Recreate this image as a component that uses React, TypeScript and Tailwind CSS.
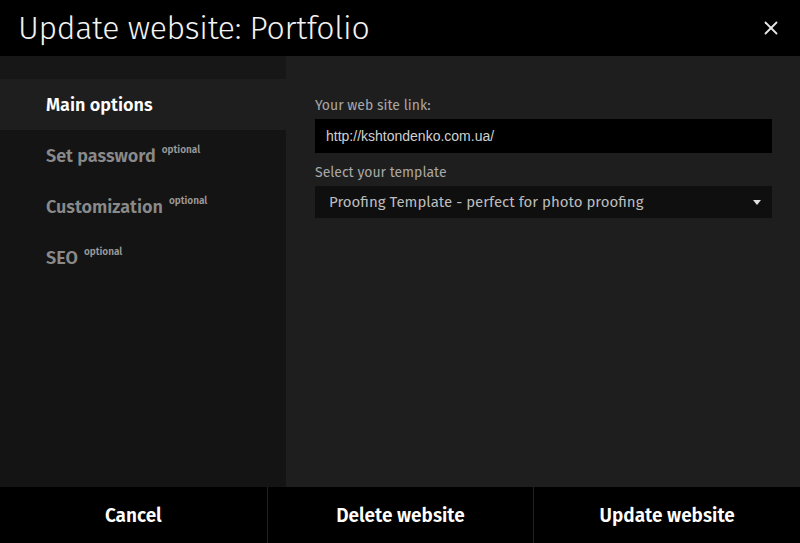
import { X } from "lucide-react";

const navItems = [
  { label: "Main options", optional: false, active: true },
  { label: "Set password", optional: true, active: false },
  { label: "Customization", optional: true, active: false },
  { label: "SEO", optional: true, active: false },
];

const fira = "font-['Fira_Sans','Open_Sans','Noto_Sans',sans-serif]";

export default function App() {
  return (
    <div className={`flex h-[543px] w-[800px] flex-col bg-black ${fira}`}>
      <header className="flex h-[56px] shrink-0 items-center justify-between bg-black pl-[18px] pr-[18px]">
        <h1 className="text-[32px] font-light leading-none tracking-[-0.01em] text-[#f2f2f2]">
          Update website: Portfolio
        </h1>
        <button className="text-[#e6e6e6]">
          <X className="h-[22px] w-[22px]" strokeWidth={2} />
        </button>
      </header>

      <div className="flex min-h-0 flex-1">
        <aside className="flex w-[286px] shrink-0 flex-col bg-[#141414]">
          <div className="h-[23px] bg-[#171717]" />
          {navItems.map((item) => (
            <div
              key={item.label}
              className={`flex h-[51px] items-center pl-[46px] ${item.active ? "bg-[#1e1e1e]" : ""}`}
            >
              <span
                className={`text-[18px] font-semibold leading-none ${item.active ? "text-white" : "text-[#8a8a8a]"}`}
              >
                {item.label}
              </span>
              {item.optional ? (
                <span className="ml-[6px] -mt-[10px] text-[10px] font-semibold text-[#9a9a9a]">optional</span>
              ) : null}
            </div>
          ))}
        </aside>

        <main className="flex flex-1 flex-col bg-[#1e1e1e] pl-[29px] pr-[28px] pt-[41px]">
          <label className="text-[14px] leading-[18px] text-[#a8a8a8]">Your web site link:</label>
          <div className="mt-[4px] flex h-[34px] items-center bg-black pl-[11px] font-['Liberation_Sans',Arial,sans-serif] text-[14px] text-[#d0d0d0]">
            http://kshtondenko.com.ua/
          </div>
          <label className="mt-[11px] text-[14px] leading-[18px] text-[#a8a8a8]">Select your template</label>
          <div className="mt-[4px] flex h-[32px] items-center justify-between bg-[#0f0f0f] pl-[14px] pr-[9px] text-[15px] text-[#bdbdbd]">
            <span>Proofing Template - perfect for photo proofing</span>
            <svg width="8" height="5" viewBox="0 0 8 5" className="mr-[2px]">
              <path d="M0 0h8L4 5z" fill="#e0e0e0" />
            </svg>
          </div>
        </main>
      </div>

      <footer className="grid h-[56px] shrink-0 grid-cols-3 bg-black">
        {["Cancel", "Delete website", "Update website"].map((label, i) => (
          <button
            key={label}
            className={`flex items-center justify-center pt-[3px] text-[19px] font-semibold text-white ${i > 0 ? "border-l border-[#222]" : ""}`}
          >
            {label}
          </button>
        ))}
      </footer>
    </div>
  );
}
